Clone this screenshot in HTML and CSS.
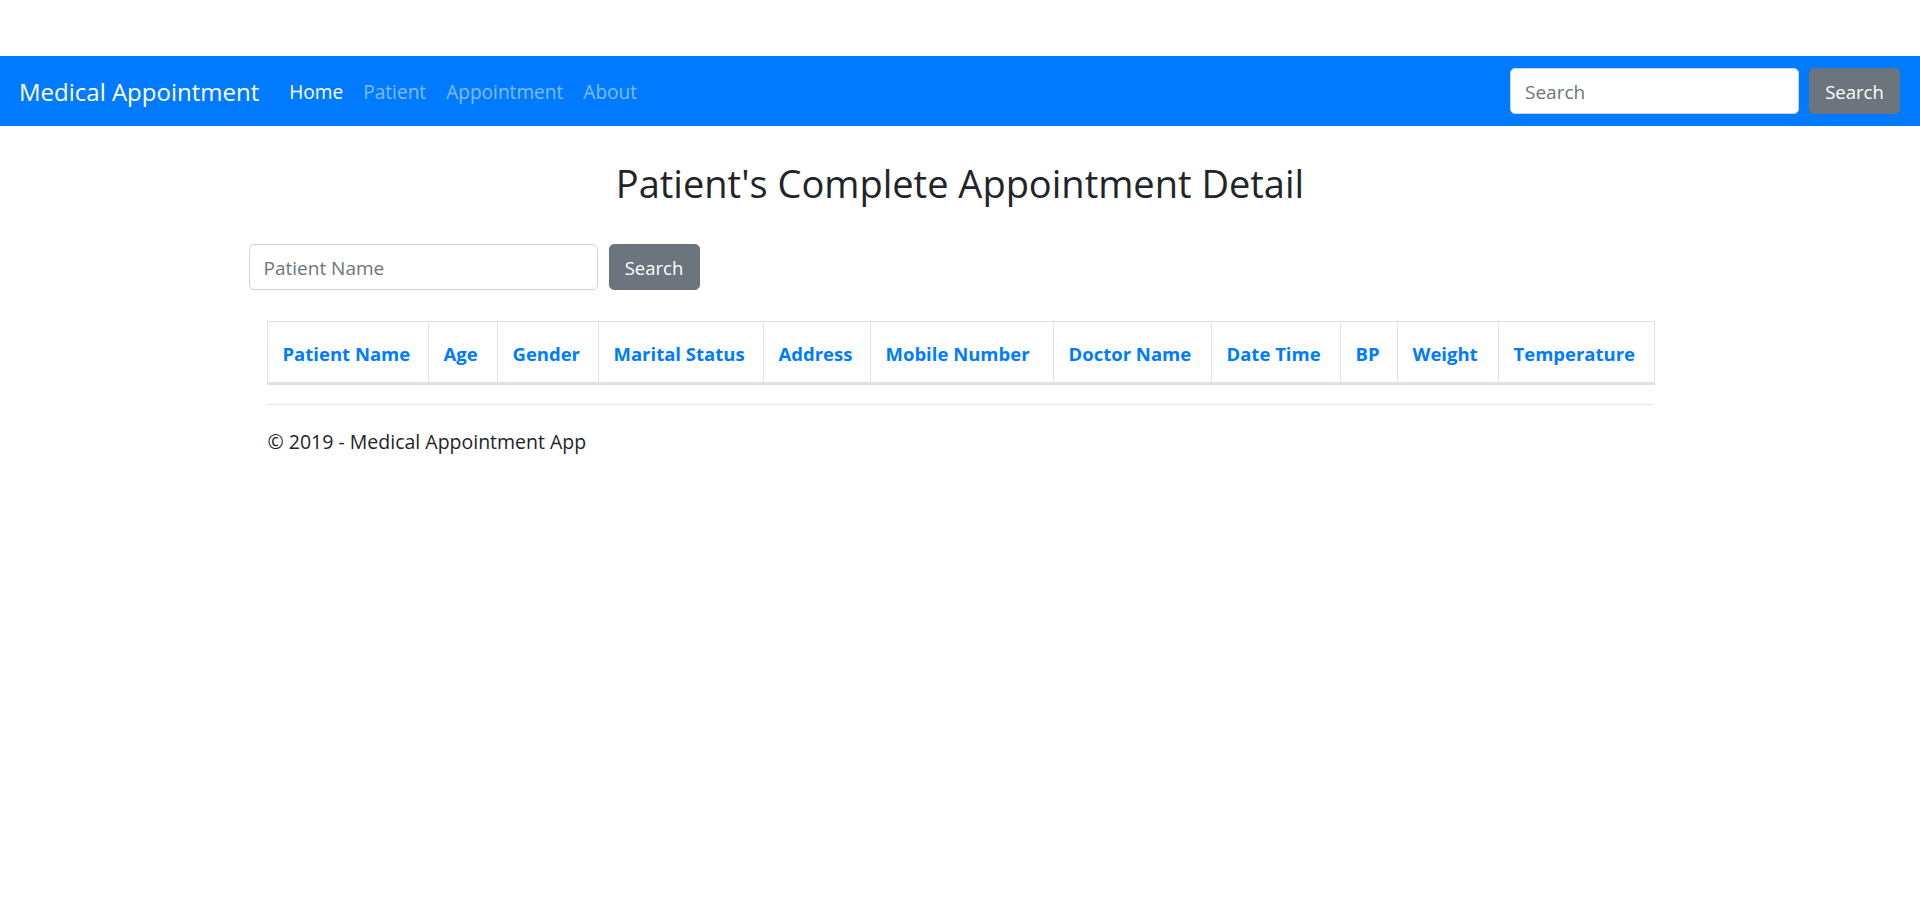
FILE: index.html
```html
<!DOCTYPE html>
<html lang="en">
<head>
<meta charset="utf-8">
<title>Medical Appointment</title>
<link rel="stylesheet" href="styles.css">
</head>
<body>
<div class="page">
  <nav class="navbar">
    <a class="brand" href="#">Medical Appointment</a>
    <ul class="nav">
      <li><a class="nav-link active" href="#">Home</a></li>
      <li><a class="nav-link" href="#">Patient</a></li>
      <li><a class="nav-link" href="#">Appointment</a></li>
      <li><a class="nav-link" href="#">About</a></li>
    </ul>
    <form class="nav-form">
      <input class="control nav-search" type="text" placeholder="Search">
      <button class="btn" type="button">Search</button>
    </form>
  </nav>

  <main class="container">
    <h1 class="title">Patient's Complete Appointment Detail</h1>
    <form class="search-row">
      <input class="control patient-input" type="text" placeholder="Patient Name">
      <button class="btn" type="button">Search</button>
    </form>

    <table class="table">
      <thead>
        <tr>
          <th class="c-name">Patient Name</th>
          <th class="c-age">Age</th>
          <th class="c-gender">Gender</th>
          <th class="c-marital">Marital Status</th>
          <th class="c-address">Address</th>
          <th class="c-mobile">Mobile Number</th>
          <th class="c-doctor">Doctor Name</th>
          <th class="c-date">Date Time</th>
          <th class="c-bp">BP</th>
          <th class="c-weight">Weight</th>
          <th class="c-temp">Temperature</th>
        </tr>
      </thead>
      <tbody></tbody>
    </table>

    <hr class="rule">
    <footer class="footer">
      <p>&copy; 2019 - Medical Appointment App</p>
    </footer>
  </main>
</div>
</body>
</html>
```

FILE: styles.css
```css
* { box-sizing: border-box; }

html, body {
  margin: 0;
  padding: 0;
  background: #fff;
}

body {
  font-family: "Open Sans", "Noto Sans", sans-serif;
  font-size: 18.5px;
  line-height: 30px;
  color: #212529;
}

.page {
  padding-top: 56px;
}

/* Navbar */
.navbar {
  display: flex;
  align-items: center;
  height: 70px;
  padding: 0 20px 0 19px;
  background: #007bff;
}

.brand {
  font-size: 24px;
  line-height: 36px;
  padding-top: 1px;
  color: #fff;
  text-decoration: none;
  margin-right: 20px;
  white-space: nowrap;
}

.nav {
  display: flex;
  list-style: none;
  margin: 0;
  padding: 0;
  flex: 1;
}

.nav-link {
  display: block;
  padding: 9px 10px 7px;
  color: rgba(255, 255, 255, 0.5);
  text-decoration: none;
  font-size: 19.1px;
}

.nav-link.active {
  color: #fff;
}

.nav-form {
  display: flex;
  align-items: center;
  gap: 10px;
}

.control {
  height: 46px;
  padding: 2px 14px 0;
  font-family: inherit;
  font-size: 19px;
  color: #495057;
  background: #fff;
  border: 1px solid #ced4da;
  border-radius: 5px;
  outline: none;
}

.control::placeholder {
  color: #6c757d;
  opacity: 1;
}

.nav-search {
  width: 289px;
}

.btn {
  height: 46px;
  width: 91px;
  padding: 0;
  font-family: inherit;
  font-size: 18.5px;
  color: #fff;
  background: #6c757d;
  border: 1px solid #6c757d;
  border-radius: 5px;
  cursor: pointer;
}

/* Content */
.container {
  width: 1387px;
  margin: 0 auto;
}

.title {
  margin: 34px 0 0;
  font-size: 38px;
  font-weight: 400;
  line-height: 46px;
  text-align: center;
}

.search-row {
  display: flex;
  gap: 11px;
  margin: 38px 0 0 -18px;
}

.patient-input {
  width: 349px;
}

.table {
  width: 1388px;
  margin: 31px 0 0;
  border-collapse: collapse;
  table-layout: fixed;
  border: 1px solid #dee2e6;
}

.table th {
  padding: 17px 15px 13px;
  text-align: left;
  font-weight: 700;
  color: #007bff;
  white-space: nowrap;
  border: 1px solid #dee2e6;
  border-bottom: 3px solid #dee2e6;
  vertical-align: bottom;
}

.c-name { width: 161px; }
.c-age { width: 69px; }
.c-gender { width: 101px; }
.c-marital { width: 165px; }
.c-address { width: 107px; }
.c-mobile { width: 183px; }
.c-doctor { width: 158px; }
.c-date { width: 129px; }
.c-bp { width: 57px; }
.c-weight { width: 101px; }
.c-temp { width: 156px; }

.rule {
  margin: 19px 0 0;
  border: 0;
  border-top: 1px solid rgba(0, 0, 0, 0.1);
}

.footer p {
  margin: 22px 0 0 1px;
  font-size: 19.5px;
}
```
